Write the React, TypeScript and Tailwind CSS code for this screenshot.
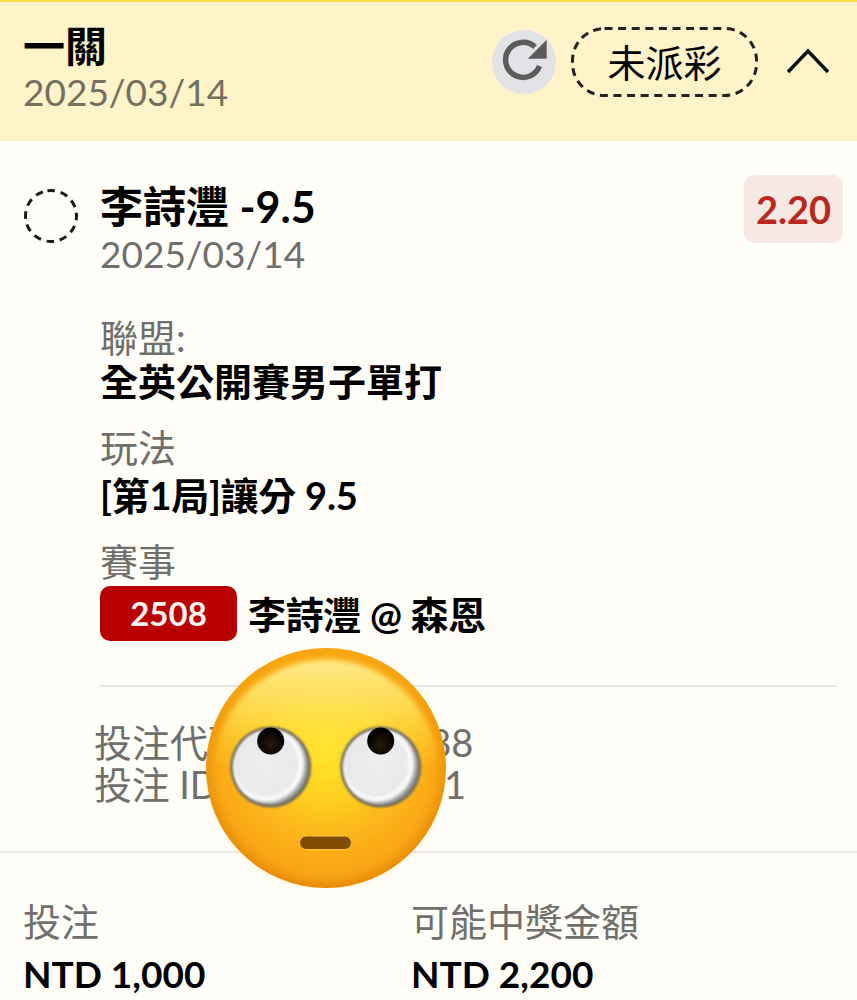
import React from 'react';

const FONT = "font-['Lato','Noto_Sans_CJK_TC',sans-serif]";

const RefreshIcon = () => (
  <svg viewBox="0 0 64 64" className="h-[64px] w-[64px]">
    <circle cx="32" cy="32" r="32" fill="#e2e3e6" />
    <path d="M47.5 36 A17.5 17.5 0 1 1 43 17" fill="none" stroke="#5c5c5c" strokeWidth="5.5" />
    <path d="M54.7 9.7 L54.7 28.7 L35.7 28.7 Z" fill="#5c5c5c" />
  </svg>
);

const DashedCircle = () => (
  <svg viewBox="0 0 54 54" className="mt-[14px] h-[54px] w-[54px]">
    <circle
      cx="27"
      cy="27"
      r="25.5"
      fill="none"
      stroke="#1a1a1a"
      strokeWidth="3"
      strokeDasharray="7.5 5.85"
      transform="rotate(-98 27 27)"
    />
  </svg>
);

// eye of the emoji, lies on the face svg
const Eye = ({ cx, cy }: { cx: number; cy: number }) => (
  <g>
    <circle cx={cx} cy={cy} r="40.5" fill="#6f6b58" filter="url(#soft)" />
    <circle cx={cx} cy={cy} r="38" fill="url(#eyeBall)" filter="url(#soft)" />
    <circle cx={cx} cy={cy - 26} r="13.5" fill="url(#pupil)" />
  </g>
);

const RollingEyes = () => (
  <svg viewBox="0 0 240 240" className="h-[240px] w-[240px]">
    <defs>
      <filter id="soft" x="-20%" y="-20%" width="140%" height="140%">
        <feGaussianBlur stdDeviation="1" />
      </filter>
      <filter id="softer" x="-20%" y="-20%" width="140%" height="140%">
        <feGaussianBlur stdDeviation="5" />
      </filter>
      <filter id="rimBlur" x="-20%" y="-20%" width="140%" height="140%">
        <feGaussianBlur stdDeviation="2.5" />
      </filter>
      <linearGradient id="faceBase" x1="0" y1="0" x2="0" y2="1">
        <stop offset="0%" stopColor="#f7a512" />
        <stop offset="100%" stopColor="#e58707" />
      </linearGradient>
      <radialGradient id="face" cx="50%" cy="40%" r="66%">
        <stop offset="0%" stopColor="#ffe52c" />
        <stop offset="32%" stopColor="#fed322" />
        <stop offset="66%" stopColor="#fbb01a" />
        <stop offset="100%" stopColor="#f59c0e" />
      </radialGradient>
      <linearGradient id="shine" x1="0" y1="0" x2="0" y2="1">
        <stop offset="0%" stopColor="#ffe98c" />
        <stop offset="22%" stopColor="#ffe45c" stopOpacity="0.75" />
        <stop offset="48%" stopColor="#ffe030" stopOpacity="0" />
      </linearGradient>
      <radialGradient id="eyeBall" cx="44%" cy="46%" r="54%">
        <stop offset="0%" stopColor="#eeeef0" />
        <stop offset="74%" stopColor="#e9e9ec" />
        <stop offset="87%" stopColor="#ffffff" />
        <stop offset="100%" stopColor="#8f8f8f" />
      </radialGradient>
      <radialGradient id="pupil" cx="50%" cy="62%" r="60%">
        <stop offset="0%" stopColor="#2a1c0a" />
        <stop offset="70%" stopColor="#070503" />
        <stop offset="100%" stopColor="#000000" />
      </radialGradient>
    </defs>
    <circle cx="120" cy="120" r="120" fill="url(#faceBase)" />
    <circle cx="120" cy="122" r="113" fill="url(#face)" filter="url(#softer)" />
    <circle cx="120" cy="124" r="112" fill="url(#shine)" filter="url(#rimBlur)" />
    <Eye cx={64.7} cy={119} />
    <Eye cx={174.7} cy={119} />
    <rect x="93.5" y="188" width="52" height="13.5" rx="6.7" fill="#7f4c06" stroke="#fbc44a" strokeWidth="1" />
  </svg>
);

const Label = ({ children }: { children: React.ReactNode }) => (
  <div className="text-[38px] leading-[44px] text-[#6f6f6c]">{children}</div>
);

const Value = ({ children }: { children: React.ReactNode }) => (
  <div className="text-[38px] font-bold leading-[44px] text-black">{children}</div>
);

const Money = ({ children }: { children: React.ReactNode }) => (
  <div className="mt-[9px] text-[37px] font-bold leading-[44px] text-black">{children}</div>
);

export default function App() {
  return (
    <div className={`${FONT} relative h-[1000px] w-[857px] overflow-hidden bg-[#fffef8]`}>
      {/* Header */}
      <header className="flex h-[141px] items-start justify-between border-t-2 border-[#f6dc45] bg-[#fff3c9] pl-[23px] pr-[27px]">
        <div className="pt-[19px]">
          <div className="text-[42px] font-bold leading-[50px] text-black">一關</div>
          <div className="text-[37px] leading-[42px] text-[#73705f]">2025/03/14</div>
        </div>
        <div className="flex items-center pt-[25px]">
          <RefreshIcon />
          <div className="relative ml-[15px] flex h-[70px] w-[187px] items-center justify-center text-[38px] leading-none text-black">
            <svg viewBox="0 0 187 70" className="absolute inset-0 h-[70px] w-[187px]">
              <rect x="1.5" y="1.5" width="184" height="67" rx="32" fill="none" stroke="#222" strokeWidth="3" strokeDasharray="8 5.6" />
            </svg>
            未派彩
          </div>
          <svg viewBox="0 0 44 28" className="ml-[28px] -mt-[5px] h-[28px] w-[44px]" fill="none" stroke="#111" strokeWidth="3.5">
            <path d="M2 26 L22 5 L42 26" />
          </svg>
        </div>
      </header>

      {/* Selection */}
      <section className="border-b-2 border-[#ebe9e2] pb-[46px] pl-[24px] pr-[20px] pt-[34px]">
        <div className="-mr-[6px] flex items-start">
          <DashedCircle />
          <div className="ml-[22px] flex-1 pt-[7px]">
            <div className="text-[43px] font-bold leading-[50px] text-black">李詩灃 -9.5</div>
            <div className="text-[37px] leading-[43px] text-[#6f6f6c]">2025/03/14</div>
          </div>
          <div className="flex h-[68px] w-[99px] items-center justify-center rounded-[10px] bg-[#f6e8e2] text-[38px] font-bold text-[#b8281f]">
            2.20
          </div>
        </div>

        <div className="ml-[76px] mt-[40px] flex flex-col gap-[22px]">
          <div>
            <Label>聯盟:</Label>
            <Value>全英公開賽男子單打</Value>
          </div>
          <div>
            <Label>玩法</Label>
            <div className="mt-[4px] tracking-[-0.25px]">
              <Value>[第1局]讓分 9.5</Value>
            </div>
          </div>
          <div>
            <Label>賽事</Label>
            <div className="mt-[3px] flex items-center">
              <div className="flex h-[55px] w-[137px] items-center justify-center rounded-[10px] bg-[#b80000] text-[33px] font-bold text-[#fff5f0]">
                2508
              </div>
              <div className="ml-[11px] tracking-[-0.33px]">
                <Value>李詩灃 @ 森恩</Value>
              </div>
            </div>
          </div>
        </div>

        <div className="ml-[76px] mt-[44px] border-t-2 border-[#e6e5de] pt-[34px]">
          <div className="-ml-[6px] whitespace-nowrap text-[38px] leading-[42px] text-[#6f6f6c]">
            <div>投注代碼 : 000000388</div>
            <div className="tracking-[-0.15px]">投注 ID : 0000000001</div>
          </div>
        </div>
      </section>

      {/* Totals */}
      <section className="flex pl-[23px] pt-[46px]">
        <div className="w-[388px]">
          <Label>投注</Label>
          <Money>NTD 1,000</Money>
        </div>
        <div>
          <Label>可能中獎金額</Label>
          <Money>NTD 2,200</Money>
        </div>
      </section>

      {/* Emoji lying over the page */}
      <div className="absolute left-[206px] top-[648px]">
        <RollingEyes />
      </div>
    </div>
  );
}
